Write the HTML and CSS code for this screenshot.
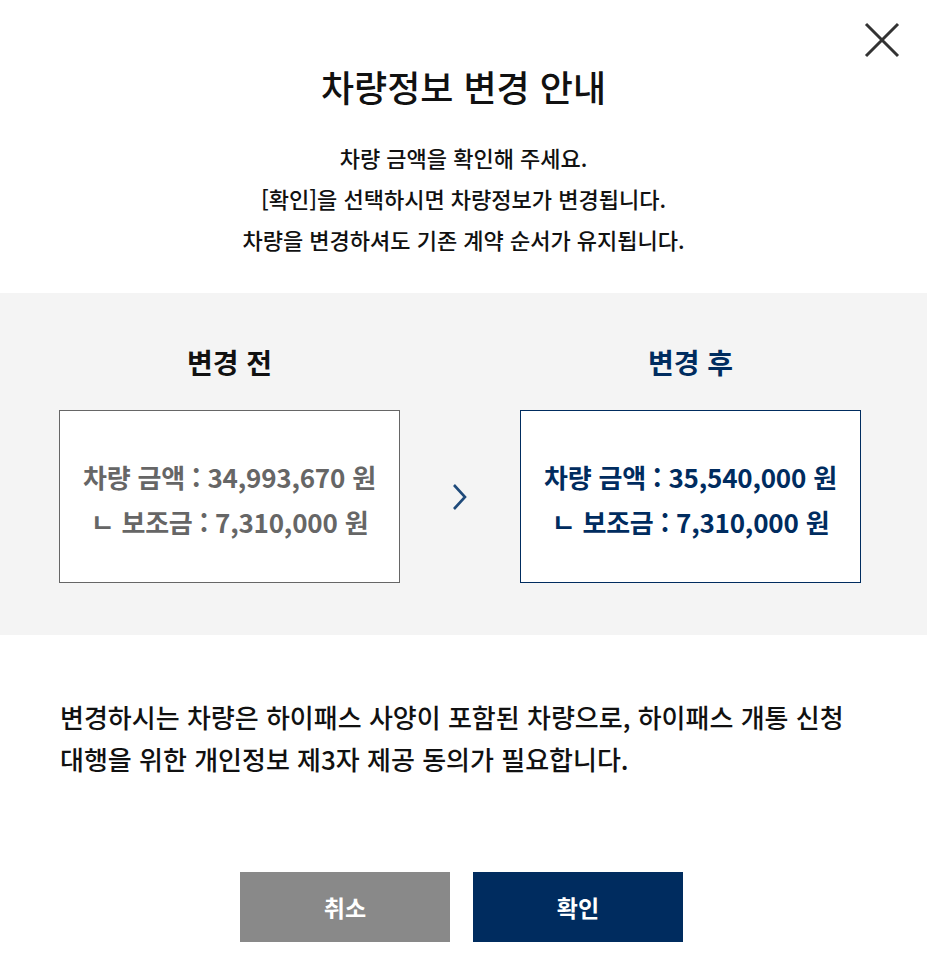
FILE: index.html
```html
<!DOCTYPE html>
<html lang="ko">
<head>
    <meta charset="UTF-8">
    <meta name="viewport" content="width=device-width, initial-scale=1.0">
    <title>차량정보 변경 안내</title>
    <link rel="stylesheet" href="styles.css">
</head>
<body>
    <div class="popup">
        <button class="close-button" aria-label="닫기">
            <svg width="36" height="36" viewBox="0 0 36 36">
                <path d="M2 2 L34 34 M34 2 L2 34" stroke="#333" stroke-width="3" fill="none"/>
            </svg>
        </button>

        <div class="popup-header">
            <h1 class="popup-title">차량정보 변경 안내</h1>
            <p class="popup-desc">
                차량 금액을 확인해 주세요.<br>
                [확인]을 선택하시면 차량정보가 변경됩니다.<br>
                차량을 변경하셔도 기존 계약 순서가 유지됩니다.
            </p>
        </div>

        <div class="compare">
            <div class="compare-col">
                <h2 class="compare-title">변경 전</h2>
                <div class="price-box">
                    <p>차량 금액 : 34,993,670 원</p>
                    <p>ㄴ 보조금 : 7,310,000 원</p>
                </div>
            </div>
            <div class="compare-arrow">
                <svg width="16" height="28" viewBox="0 0 16 28">
                    <path d="M2 2 L13 14 L2 26" stroke="#1f4a7a" stroke-width="2.6" fill="none"/>
                </svg>
            </div>
            <div class="compare-col after">
                <h2 class="compare-title">변경 후</h2>
                <div class="price-box">
                    <p>차량 금액 : 35,540,000 원</p>
                    <p>ㄴ 보조금 : 7,310,000 원</p>
                </div>
            </div>
        </div>

        <p class="notice">
            변경하시는 차량은 하이패스 사양이 포함된 차량으로, 하이패스 개통 신청<br>
            대행을 위한 개인정보 제3자 제공 동의가 필요합니다.
        </p>

        <div class="popup-buttons">
            <button class="btn btn-cancel">취소</button>
            <button class="btn btn-ok">확인</button>
        </div>
    </div>
</body>
</html>
```

FILE: styles.css
```css
/* 기본 */
body {
    margin: 0;
    background-color: white;
    font-family: "Noto Sans CJK KR", "Noto Sans", sans-serif;
    color: #111;
}

.popup {
    position: relative;
    width: 927px;
    min-height: 978px;
}

/* 닫기 버튼 */
.close-button {
    position: absolute;
    top: 22px;
    right: 27px;
    border: none;
    background: none;
    padding: 0;
    cursor: pointer;
}

.close-button svg {
    display: block;
}

/* 상단 안내 */
.popup-header {
    text-align: center;
    padding-top: 60px;
    padding-bottom: 33px;
}

.popup-title {
    margin: 0;
    font-size: 36px;
    font-weight: 500;
    line-height: 52px;
}

.popup-desc {
    margin: 25px 0 0;
    font-size: 22px;
    line-height: 41px;
    font-weight: 500;
}

/* 변경 전 / 후 비교 */
.compare {
    background-color: #f4f4f4;
    display: flex;
    align-items: flex-end;
    padding: 49px 66px 52px 59px;
}

.compare-col {
    width: 341px;
    text-align: center;
}

.compare-title {
    margin: 0 0 28px;
    font-size: 28px;
    font-weight: 700;
    line-height: 40px;
}

.price-box {
    box-sizing: border-box;
    height: 173px;
    padding-top: 4px;
    background-color: white;
    border: 1px solid #666;
    display: flex;
    flex-direction: column;
    justify-content: center;
    color: #666;
    font-size: 26px;
    font-weight: 700;
    letter-spacing: -0.2px;
}

.price-box p {
    margin: 0;
    line-height: 45px;
}

.compare-arrow {
    width: 120px;
    height: 173px;
    display: flex;
    align-items: center;
    justify-content: center;
}

.compare-col.after .compare-title,
.compare-col.after .price-box {
    color: #002c5f;
}

.compare-col.after .price-box {
    border-color: #002c5f;
}

/* 하단 문구 */
.notice {
    margin: 61px 0 0 60px;
    font-size: 26px;
    line-height: 42px;
    font-weight: 500;
}

/* 버튼 */
.popup-buttons {
    display: flex;
    justify-content: center;
    gap: 23px;
    margin-top: 92px;
    padding-right: 4px;
}

.btn {
    width: 210px;
    height: 70px;
    border: none;
    color: white;
    font-family: inherit;
    font-size: 23px;
    font-weight: 700;
    cursor: pointer;
}

.btn-cancel {
    background-color: #898989;
}

.btn-ok {
    background-color: #002c5f;
}
```
